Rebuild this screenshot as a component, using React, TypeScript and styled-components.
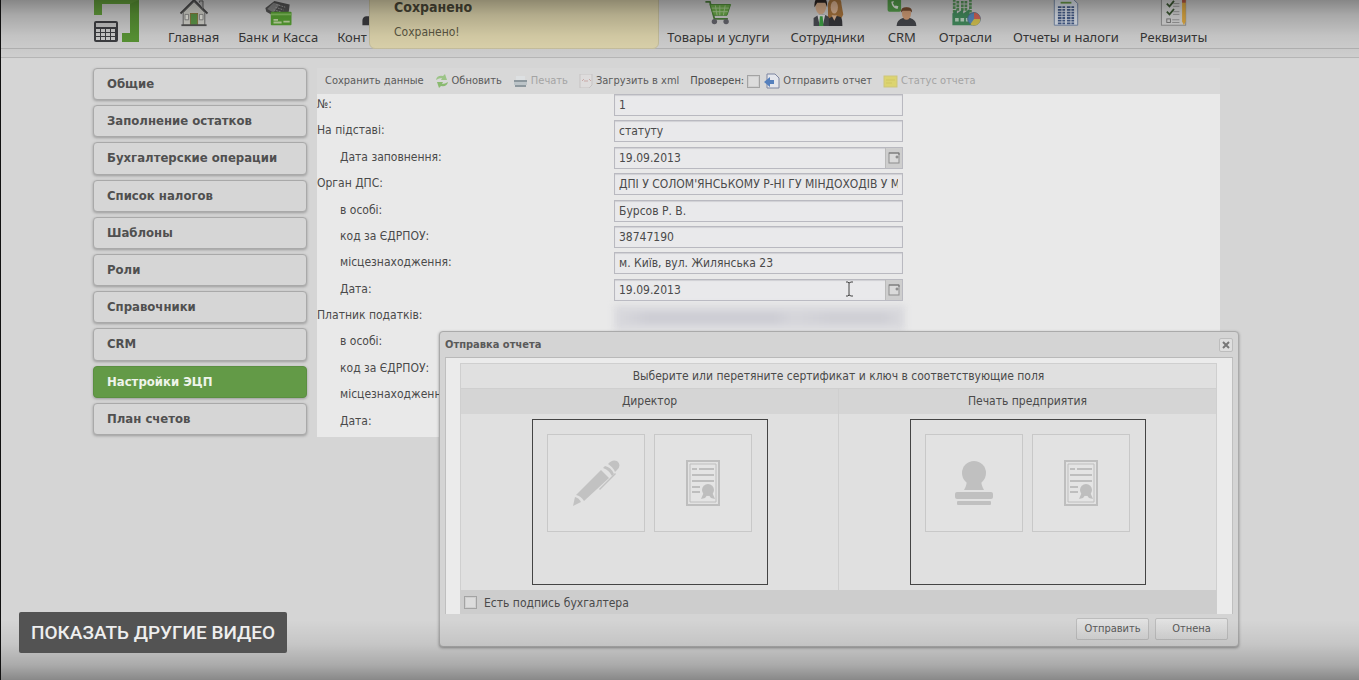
import React from 'react';
import styled, { createGlobalStyle } from 'styled-components';

const GlobalStyle = createGlobalStyle`
  * { box-sizing: border-box; }
  body {
    margin: 0;
    background: #d5d5d5;
    color: #4a4a4a;
    font: 12px/20px 'DejaVu Sans Condensed', 'DejaVu Sans', sans-serif;
  }
  button, input { font: inherit; color: inherit; }
`;

const Page = styled.div`
  position: relative;
  min-height: 100vh;
  border-left: 1px solid #111;
  overflow: hidden;
`;

const Shade = styled.div<{ $side: 'top' | 'bottom' }>`
  position: absolute;
  left: 0;
  right: 0;
  ${p => p.$side}: 0;
  height: 60px;
  pointer-events: none;
  background: linear-gradient(
    to ${p => p.$side},
    rgba(0, 0, 0, 0) 0%,
    rgba(0, 0, 0, 0.07) 40%,
    rgba(0, 0, 0, 0.2) 75%,
    rgba(0, 0, 0, 0.36) 100%
  );
`;

const Header = styled.header`
  display: flex;
  align-items: flex-end;
  height: 49px;
  padding: 0 92px 0 92px;
  border-bottom: 1px solid #b4b4b4;
  background: #d2d2d2;
`;

const Strip = styled.div`
  height: 9px;
  border-bottom: 1px solid #b6b6b6;
  background: #d0d0d0;
`;

const Logo = styled.a`
  display: block;
  width: 46px;
  height: 43px;
  margin: 0 29px 5px 0;
`;

const Nav = styled.nav<{ $gap: number }>`
  display: flex;
  gap: ${p => p.$gap}px;
  height: 100%;
`;

const NavItem = styled.a<{ $wide?: boolean }>`
  display: flex;
  flex-direction: column;
  justify-content: flex-end;
  align-items: ${p => (p.$wide ? 'flex-start' : 'center')};
  width: ${p => (p.$wide ? '330px' : 'auto')};
  padding-bottom: 1px;
  color: #383838;
  font: 13px/20px 'Noto Sans', sans-serif;
  text-decoration: none;
  white-space: nowrap;

  svg { display: block; height: 30px; }
`;

const Toast = styled.div`
  position: absolute;
  top: -8px;
  left: 368px;
  width: 290px;
  height: 57px;
  padding: 4px 24px;
  border: 1px solid #c9c2a0;
  border-radius: 6px;
  background: #dfd6ae;
  color: #5c5844;
`;

const ToastTitle = styled.strong`
  display: block;
  color: #4a4736;
  font: bold 14px/20px 'DejaVu Sans Condensed', sans-serif;
`;

const ToastText = styled.p`
  margin: 5px 0 0;
`;

const Main = styled.main`
  display: flex;
  align-items: flex-start;
  gap: 10px;
  padding: 10px 139px 0 92px;
`;

const Side = styled.nav`
  flex: none;
  display: grid;
  grid-auto-rows: 1fr;
  gap: 5px;
  width: 214px;
  min-height: 367px;
`;

const SideItem = styled.a<{ $active?: boolean }>`
  display: flex;
  align-items: center;
  padding: 0 13px;
  border: 1px solid ${p => (p.$active ? '#5b8f42' : '#a9a9a9')};
  border-radius: 4px;
  background: ${p => (p.$active ? '#639a47' : '#d6d6d6')};
  box-shadow: 0 1px 3px rgba(0, 0, 0, 0.28);
  color: ${p => (p.$active ? '#eef4ea' : '#505050')};
  font-size: 13px;
  font-weight: bold;
  text-decoration: none;
`;

const Panel = styled.section`
  flex: 1;
  min-width: 0;
`;

const Toolbar = styled.div`
  display: flex;
  align-items: center;
  height: 26px;
  padding-left: 8px;
  background: #d8d8d8;
  white-space: nowrap;
`;

const Tool = styled.button`
  display: flex;
  align-items: center;
  gap: 3px;
  margin: 0 11px 0 0;
  padding: 0;
  border: 0;
  background: none;
  color: #5a5a5a;
  font-size: 11px;

  &:disabled { color: #a4a4a4; }
`;

const CheckTool = styled.label`
  display: flex;
  align-items: center;
  gap: 3px;
  margin-right: 4px;
  font-size: 11px;
`;

const Check = styled.input`
  appearance: none;
  width: 13px;
  height: 13px;
  margin: 0;
  border: 1px solid #a3a3a3;
  background: #dcdcdc;
  box-shadow: inset 0 0 0 1px #cfcfcf;
`;

const Form = styled.form`
  display: grid;
  grid-auto-rows: 1fr;
  min-height: 343px;
  background: #e9e9e9;
`;

const Row = styled.div<{ $indent?: boolean }>`
  display: flex;
  align-items: flex-start;

  label {
    width: 297px;
    padding-left: ${p => (p.$indent ? '23px' : '0')};
  }
`;

const Field = styled.div`
  display: flex;
  width: 289px;
  height: 22px;
  border: 1px solid #b9b9c0;
  background: #e9e9eb;
  box-shadow: inset 0 1px 1px #d0d0d4;
`;

const FieldInput = styled.input`
  flex: 1;
  min-width: 0;
  padding: 0 4px;
  border: 0;
  outline: 0;
  background: none;
`;

const DateButton = styled.button`
  display: flex;
  align-items: center;
  justify-content: center;
  width: 17px;
  padding: 0;
  border: 0;
  border-left: 1px solid #bbb;
  background: #cecece;
`;

const Redacted = styled.div`
  width: 291px;
  height: 26px;
  background:
    linear-gradient(90deg, transparent, #cdcdd4 12%, #cdcdd4 55%, #d6d6db 62%, #cfcfd5 75%, #cfcfd5 92%, transparent) center / 100% 12px no-repeat,
    #dadade;
  filter: blur(3px);
`;

const Cursor = styled.svg`
  position: absolute;
  top: 281px;
  left: 844px;
`;

const Dialog = styled.section`
  position: absolute;
  top: 331px;
  left: 438px;
  width: 800px;
  padding: 0 5px 4px;
  border: 1px solid #aaa;
  border-radius: 4px;
  background: #d4d4d4;
  box-shadow: 0 1px 3px rgba(0, 0, 0, 0.36);
`;

const DialogHead = styled.header`
  display: flex;
  align-items: center;
  justify-content: space-between;
  height: 25px;
`;

const DialogTitle = styled.h2`
  margin: 0;
  color: #5a5a5a;
  font: bold 11px/20px 'DejaVu Sans Condensed', sans-serif;
`;

const Close = styled.button`
  display: flex;
  align-items: center;
  justify-content: center;
  width: 14px;
  height: 14px;
  padding: 0;
  border: 1px solid #bdbdbd;
  border-radius: 2px;
  background: #dedede;
`;

const DialogBody = styled.div`
  padding: 5px 15px 0 14px;
  border-top: 1px solid #b9b9b9;
  border-left: 1px solid #bfbfbf;
  border-right: 1px solid #bfbfbf;
  background: #ebebeb;
`;

const CertTable = styled.table`
  width: 100%;
  border-collapse: collapse;
  table-layout: fixed;
  background: #e0e0e0;

  th, td {
    padding: 0;
    border: 1px solid #cfcfcf;
    font-weight: normal;
    text-align: center;
  }
  tr:nth-child(2) th {
    border-top-color: #d6d6d6;
    border-bottom: 0;
    background: #d5d5d5;
  }
  th { height: 25px; }
  td { padding: 5px 0; border-top: 0; border-bottom: 0; }
`;

const KeyBox = styled.div`
  display: flex;
  justify-content: center;
  gap: 9px;
  width: 236px;
  height: 166px;
  margin: 0 auto;
  padding-top: 14px;
  border: 1px solid #444;
`;

const Drop = styled.button`
  display: flex;
  align-items: center;
  justify-content: center;
  width: 98px;
  height: 98px;
  padding: 0;
  border: 1px solid #c8c8c8;
  background: #e2e2e2;
`;

const Accountant = styled.label`
  display: flex;
  align-items: center;
  gap: 7px;
  height: 24px;
  padding: 2px 0 0 4px;
  background: #cdcdcd;
`;

const Actions = styled.footer`
  display: flex;
  justify-content: flex-end;
  gap: 6px;
  padding: 4px 5px 2px;
`;

const Action = styled.button`
  width: 73px;
  height: 22px;
  padding: 0;
  border: 1px solid #bcbcbc;
  border-radius: 2px;
  background: linear-gradient(#e2e2e2, #d6d6d6);
  color: #5a5a5a;
  font-size: 11px;
`;

const MoreVideos = styled.button`
  position: absolute;
  bottom: 27px;
  left: 18px;
  height: 41px;
  padding: 0 12px;
  border: 0;
  border-radius: 2px;
  background: #535353;
  color: #eee;
  font: 500 19px/40px Roboto, sans-serif;
`;

const LogoArt = () => (
  <svg width="46" height="43" viewBox="0 0 46 43" aria-hidden="true">
    <path d="M1 0H46V42H29V33H37V4H9V15H1Z" fill="#64a03c" />
    <path d="M37 4L46 0V42H29V33H37Z" fill="#5a9635" />
    <rect x="1" y="21" width="24" height="21" rx="2" fill="#3d3e42" />
    <rect x="3" y="23" width="20" height="4" fill="#c4c4c4" />
    {[29, 33, 37].map(y => [3, 8, 13, 18].map(x => (
      <rect key={`${x}-${y}`} x={x} y={y} width="4" height="3" fill="#d0d0d0" />
    )))}
  </svg>
);

const HouseArt = () => (
  <svg width="32" viewBox="0 0 32 30" aria-hidden="true">
    <path d="M4 14V28H28V14L16 2Z" fill="#d6d6cf" stroke="#666" />
    <path d="M1 15L16 0L31 15" fill="none" stroke="#4a4a4a" strokeWidth="2" />
    <path d="M22 3V1h4v9" fill="#bbb" stroke="#555" />
    <rect x="12" y="15" width="8" height="13" fill="#5f9a4a" stroke="#8a7a3a" />
    <path d="M6 16h4v6H6zM22 16h4v6h-4z" fill="#f0f0e8" stroke="#888" />
    <path d="M2 28H30" stroke="#555" strokeWidth="2" />
  </svg>
);

const BankArt = () => (
  <svg width="32" viewBox="0 0 32 30" aria-hidden="true">
    <path d="M2 9L12 1L29 5L28 13L12 18L3 13Z" fill="#555" />
    <path d="M4 10L11 3L18 5L11 14Z" fill="#888" />
    <path d="M14 5l10 3M13 8l9 3M11 11l8 2" stroke="#aaa" strokeDasharray="2 1" />
    <rect x="8" y="13" width="23" height="15" rx="1" fill="#5aa634" />
    <path d="M8 16H31" stroke="#8aca64" strokeWidth="2" />
    <path d="M11 22h5M11 25h9M22 24h7" stroke="#c6dea8" strokeWidth="2" />
  </svg>
);

const CartArt = () => (
  <svg width="32" viewBox="0 0 32 30" aria-hidden="true">
    <path d="M2 2H7L12 21H27" fill="none" stroke="#4d7f3c" strokeWidth="2" />
    <path d="M7 5H30L26 17H11Z" fill="#6fb04c" stroke="#4b8a33" />
    <path d="M9 9H28M10 13H27M13 6l2 11M18 6v11M24 6l-2 11" stroke="#b0d698" />
    <circle cx="12" cy="24" r="3" fill="#66666e" /><circle cx="25" cy="24" r="3" fill="#66666e" />
  </svg>
);

const StaffArt = () => (
  <svg width="34" viewBox="0 0 34 30" aria-hidden="true">
    <path d="M17 24V4Q19-3 25-3Q32-3 32 5L34 16L30 24Z" fill="#ad783f" />
    <ellipse cx="24" cy="8" rx="4" ry="7" fill="#e2b997" />
    <path d="M17 29V21L24 17L31 19Q33 20 33 29Z" fill="#38383c" />
    <path d="M21 17l3 6 3-6" fill="#e2b997" />
    <path d="M1 29V20L7 16H13L18 19V29Z" fill="#4b4d54" />
    <ellipse cx="9" cy="7" rx="6" ry="9" fill="#deb491" />
    <path d="M2 8Q1-3 9-3T16 8L14 3H5Z" fill="#2d2523" />
    <path d="M5 16L8 29H11L14 16Z" fill="#e6e6e6" /><path d="M8 18h3l1 11H7z" fill="#3fa346" />
  </svg>
);

const CrmArt = () => (
  <svg width="32" viewBox="0 0 32 30" aria-hidden="true">
    <rect x="0" y="-4" width="15" height="17" rx="2" fill="#57a24c" />
    <path d="M4 2Q5 9 11 10L12 7L9 6L8 7L6 4L7 1Z" fill="#eef4ea" />
    <path d="M10 29Q10 22 17 20H25Q32 22 32 29Z" fill="#46484d" />
    <ellipse cx="21" cy="15" rx="5" ry="7" fill="#d9a27a" />
    <path d="M15 14Q14 8 21 8T27 14L25 12H17Z" fill="#7a4d30" />
  </svg>
);

const IndustryArt = () => (
  <svg width="34" viewBox="0 0 34 30" aria-hidden="true">
    <path d="M5 14V0M9 12V0M14 12V0M18 12V0M23 14V0" stroke="#5a9a5c" strokeWidth="3" strokeDasharray="3 1" />
    <path d="M3 28V15L8 10V15L15 10V15L22 10V15H25V28Z" fill="#459060" />
    <path d="M6 20h4v4H6zM12 20h4v4h-4zM18 20h4v4h-4z" fill="#c0dcc8" />
    <circle cx="27" cy="21" r="7" fill="#5a8fc4" stroke="#54708a" />
    <path d="M27 21V14A7 7 0 0 1 34 21Z" fill="#d9685a" /><path d="M27 21H34A7 7 0 0 1 23 27Z" fill="#dbc852" />
  </svg>
);

const ReportArt = () => (
  <svg width="28" viewBox="0 0 28 30" aria-hidden="true">
    <path d="M1-2H21L27 4V28H1Z" fill="#e3e9f3" stroke="#7186a8" />
    <path d="M8 3H20" stroke="#6d9d4a" strokeWidth="2" />
    <path d="M5 8H13M5 11H13M5 14H13M5 17H13M5 20H13M5 23H13M5 26H13M15 8H23M15 11H23M15 14H23M15 17H23M15 20H23M15 23H23M15 26H23" stroke="#49618f" strokeWidth="2" strokeDasharray="4 1" />
  </svg>
);

const ChecklistArt = () => (
  <svg width="30" viewBox="0 0 30 30" aria-hidden="true">
    <rect x="1" y="-3" width="27" height="31" fill="#dedede" stroke="#909090" />
    <path d="M7 4l3 3 5-6M7 13l3 3 5-6" fill="none" stroke="#3e5a35" strokeWidth="2" />
    <rect x="7" y="21" width="4" height="4" fill="none" stroke="#777" />
    <path d="M14 4h7M14 7h7M14 13h7M14 16h7M13 22h8M13 25h8" stroke="#999" />
    <path d="M24-1h4v25l-2 4-2-4z" fill="#e6ae42" /><path d="M24-1h4v4h-4z" fill="#ba5a4a" />
  </svg>
);

const PeopleArt = () => (
  <svg width="40" viewBox="0 0 40 30" aria-hidden="true">
    <path d="M26 28V23Q26 19 30 18H40V28Z" fill="#3c3c40" />
  </svg>
);

const RefreshArt = () => (
  <svg width="14" height="14" viewBox="0 0 14 14" aria-hidden="true">
    <path d="M1 6Q2 1 8 2L10 0L12 6L6 6L7 4Q4 4 1 6Z" fill="#9cc487" />
    <path d="M13 8Q12 13 6 12L4 14L2 8L8 8L7 10Q10 10 13 8Z" fill="#8aba70" />
  </svg>
);

const PrinterArt = () => (
  <svg width="15" height="14" viewBox="0 0 15 14" aria-hidden="true">
    <path d="M3 2H12V7H3Z" fill="#dde0e2" />
    <path d="M1 6H14V11H1Z" fill="#bcc4c8" /><path d="M1 7H14M2 12H13" stroke="#8d989e" strokeWidth="2" />
  </svg>
);

const XmlArt = () => (
  <svg width="14" height="14" viewBox="0 0 14 14" aria-hidden="true">
    <path d="M1 0H13V11L10 14H1Z" fill="#dedcdc" stroke="#c6c3c3" />
    <path d="M3 7l2-2M5 7h4M10 5l2 2" stroke="#c9a9a7" />
  </svg>
);

const SendArt = () => (
  <svg width="16" height="16" viewBox="0 0 16 16" aria-hidden="true">
    <path d="M3 1H11L15 5V15H3Z" fill="#e4e6ec" stroke="#7d85a0" />
    <path d="M0 9L6 4V7H10V11H6V14Z" fill="#5580bd" />
  </svg>
);

const StatusArt = () => (
  <svg width="15" height="13" viewBox="0 0 15 13" aria-hidden="true">
    <rect x="1" y="1" width="13" height="11" fill="#dcd470" stroke="#cdc57c" />
    <path d="M3 5H12M3 8H9" stroke="#d0c662" />
  </svg>
);

const CalendarArt = () => (
  <svg width="12" height="12" viewBox="0 0 12 12" aria-hidden="true">
    <rect x="1" y="1" width="10" height="10" fill="#dadada" stroke="#8d8d8d" />
    <path d="M1 1H11V3" fill="none" stroke="#777" /><circle cx="9" cy="5" r="1" fill="none" stroke="#777" />
  </svg>
);

const PenArt = () => (
  <svg width="48" height="48" viewBox="0 0 48 48" fill="#c2c2c2" aria-hidden="true">
    <path d="M1 47L3 38Q7 39 9 43Z" />
    <path d="M4 36L29 11L37 19L12 42Q9 37 4 36Z" />
    <path d="M31 9L33 7Q39 8 42 15L40 17Q37 11 31 9Z" />
    <path d="M36 5Q40 0 45 2Q50 6 45 11L43 13Q41 8 36 5Z" />
    <path d="M39 18L43 14L44 15L28 31L27 30Z" />
  </svg>
);

const CertArt = () => (
  <svg width="34" height="46" viewBox="0 0 34 46" fill="none" stroke="#bebebe" aria-hidden="true">
    <path d="M1 1H33V45H1Z" strokeWidth="2" /><path d="M4 4H30V42H4Z" fill="#e4e4e4" />
    <path d="M6 9H11M13 9H28M6 15H28M6 21H28M6 27H14M6 32H14" strokeWidth="2" />
    <path d="M18 32L15 39L19 38L22 34L25 38L29 39L26 32Z" fill="#bebebe" stroke="none" />
    <circle cx="22" cy="30" r="6" fill="#bebebe" stroke="none" />
  </svg>
);

const StampArt = () => (
  <svg width="38" height="44" viewBox="0 0 38 44" fill="#c0c0c0" aria-hidden="true">
    <circle cx="19" cy="12" r="12" /><path d="M11 17H27Q25 22 29 29H9Q13 22 11 17Z" />
    <rect x="0" y="31" width="38" height="7" rx="2" /><rect x="2" y="40" width="34" height="4" rx="1" />
  </svg>
);

const CloseArt = () => (
  <svg width="8" height="8" viewBox="0 0 8 8" aria-hidden="true">
    <path d="M1 1L7 7M7 1L1 7" stroke="#777" strokeWidth="2" />
  </svg>
);

const mainNav = [
  { text: 'Главная', Art: HouseArt },
  { text: 'Банк и Касса', Art: BankArt },
  { text: 'Конт', Art: PeopleArt, wide: true },
];

const moreNav = [
  { text: 'Товары и услуги', Art: CartArt },
  { text: 'Сотрудники', Art: StaffArt },
  { text: 'CRM', Art: CrmArt },
  { text: 'Отрасли', Art: IndustryArt },
  { text: 'Отчеты и налоги', Art: ReportArt },
  { text: 'Реквизиты', Art: ChecklistArt },
];

const sideItems = [
  'Общие', 'Заполнение остатков', 'Бухгалтерские операции', 'Список налогов', 'Шаблоны',
  'Роли', 'Справочники', 'CRM', 'Настройки ЭЦП', 'План счетов',
];

type FormRow = { label: string; indent?: boolean; value?: string; date?: boolean; redacted?: boolean };

const rows: FormRow[] = [
  { label: '№:', value: '1' },
  { label: 'На підставі:', value: 'статуту' },
  { label: 'Дата заповнення:', indent: true, value: '19.09.2013', date: true },
  { label: 'Орган ДПС:', value: "ДПІ У СОЛОМ'ЯНСЬКОМУ Р-НІ ГУ МІНДОХОДІВ У М" },
  { label: 'в особі:', indent: true, value: 'Бурсов Р. В.' },
  { label: 'код за ЄДРПОУ:', indent: true, value: '38747190' },
  { label: 'місцезнаходження:', indent: true, value: 'м. Київ, вул. Жилянська 23' },
  { label: 'Дата:', indent: true, value: '19.09.2013', date: true },
  { label: 'Платник податків:', redacted: true },
  { label: 'в особі:', indent: true },
  { label: 'код за ЄДРПОУ:', indent: true },
  { label: 'місцезнаходженн:', indent: true },
  { label: 'Дата:', indent: true },
];

const App: React.FC = () => (
  <>
    <GlobalStyle />
    <Page>
      <Header>
        <Logo href="#" aria-label="Главная страница"><LogoArt /></Logo>
        <Nav $gap={19}>
          {mainNav.map(({ text, Art, wide }) => (
            <NavItem key={text} href="#" $wide={wide}><Art />{text}</NavItem>
          ))}
        </Nav>
        <Nav $gap={21}>
          {moreNav.map(({ text, Art }) => (
            <NavItem key={text} href="#"><Art />{text}</NavItem>
          ))}
        </Nav>
      </Header>
      <Strip />
      <Main>
        <Side>
          {sideItems.map(text => (
            <SideItem key={text} href="#" $active={text === 'Настройки ЭЦП'}>{text}</SideItem>
          ))}
        </Side>
        <Panel>
          <Toolbar>
            <Tool>Сохранить данные</Tool>
            <Tool><RefreshArt />Обновить</Tool>
            <Tool disabled><PrinterArt />Печать</Tool>
            <Tool><XmlArt />Загрузить в xml</Tool>
            <CheckTool>Проверен: <Check type="checkbox" /></CheckTool>
            <Tool><SendArt />Отправить отчет</Tool>
            <Tool disabled><StatusArt />Статус отчета</Tool>
          </Toolbar>
          <Form>
            {rows.map((row, i) => (
              <Row key={i} $indent={row.indent}>
                <label htmlFor={`field-${i}`}>{row.label}</label>
                {row.value && (
                  <Field>
                    <FieldInput id={`field-${i}`} defaultValue={row.value} />
                    {row.date && <DateButton type="button" aria-label="Календарь"><CalendarArt /></DateButton>}
                  </Field>
                )}
                {row.redacted && <Redacted />}
              </Row>
            ))}
          </Form>
        </Panel>
      </Main>

      <Cursor width="9" height="16" viewBox="0 0 9 16" fill="none" stroke="#444" aria-hidden="true">
        <path d="M1 1H3L4 2L6 1H8M4 2V14M1 15H3L4 14L6 15H8" />
      </Cursor>

      <Dialog role="dialog" aria-labelledby="dialog-title">
        <DialogHead>
          <DialogTitle id="dialog-title">Отправка отчета</DialogTitle>
          <Close aria-label="Закрыть"><CloseArt /></Close>
        </DialogHead>
        <DialogBody>
          <CertTable>
            <thead>
              <tr><th colSpan={2}>Выберите или перетяните сертификат и ключ в соответствующие поля</th></tr>
              <tr><th>Директор</th><th>Печать предприятия</th></tr>
            </thead>
            <tbody>
              <tr>
                <td>
                  <KeyBox>
                    <Drop aria-label="Ключ директора"><PenArt /></Drop>
                    <Drop aria-label="Сертификат директора"><CertArt /></Drop>
                  </KeyBox>
                </td>
                <td>
                  <KeyBox>
                    <Drop aria-label="Ключ печати"><StampArt /></Drop>
                    <Drop aria-label="Сертификат печати"><CertArt /></Drop>
                  </KeyBox>
                </td>
              </tr>
            </tbody>
          </CertTable>
          <Accountant><Check type="checkbox" />Есть подпись бухгалтера</Accountant>
        </DialogBody>
        <Actions>
          <Action>Отправить</Action>
          <Action>Отнена</Action>
        </Actions>
      </Dialog>

      <Toast role="status">
        <ToastTitle>Сохранено</ToastTitle>
        <ToastText>Сохранено!</ToastText>
      </Toast>
      <Shade $side="top" />
      <Shade $side="bottom" />
      <MoreVideos>ПОКАЗАТЬ ДРУГИЕ ВИДЕО</MoreVideos>
    </Page>
  </>
);

export default App;
